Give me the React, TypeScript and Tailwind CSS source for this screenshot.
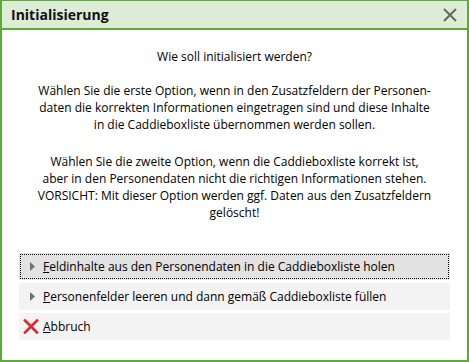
import React from 'react';

function Triangle() {
  return (
    <svg width="6" height="9" viewBox="0 0 6 9" className="shrink-0">
      <path d="M0 0 L5 4.5 L0 9 Z" fill="#707070" />
    </svg>
  );
}

function RedX() {
  return (
    <svg width="16" height="15" viewBox="0 0 16 15" className="shrink-0">
      <path d="M2 1.5 L14 13.5 M14 1.5 L2 13.5" stroke="#e0282c" strokeWidth="2.6" strokeLinecap="square" />
    </svg>
  );
}

export default function App() {
  return (
    <div
      className="w-[469px] h-[362px] bg-white border-2 border-t border-[#5aac36] flex flex-col text-black"
      style={{ fontFamily: '"Open Sans", "Noto Sans", sans-serif' }}
    >
      <div className="h-[29px] bg-[#ddecd5] border-b-2 border-[#5aac36] flex items-center justify-between pl-[9px] pr-[9px] shrink-0">
        <span className="text-[14px] font-bold text-[#111]">Initialisierung</span>
        <svg width="16" height="16" viewBox="0 0 16 16">
          <path d="M2 2 L14 14 M14 2 L2 14" stroke="#666" strokeWidth="2" />
        </svg>
      </div>

      <div className="flex flex-col items-center text-[12px] leading-[17px] text-center pt-[18px]">
        <p>Wie soll initialisiert werden?</p>
        <p className="mt-[17px]">
          Wählen Sie die erste Option, wenn in den Zusatzfeldern der Personen-
          <br />
          daten die korrekten Informationen eingetragen sind und diese Inhalte
          <br />
          in die Caddieboxliste übernommen werden sollen.
        </p>
        <p className="mt-[20px]">
          Wählen Sie die zweite Option, wenn die Caddieboxliste korrekt ist,
          <br />
          aber in den Personendaten nicht die richtigen Informationen stehen.
          <br />
          VORSICHT: Mit dieser Option werden ggf. Daten aus den Zusatzfeldern
          <br />
          gelöscht!
        </p>
      </div>

      <div className="flex flex-col gap-[3px] px-[17px] mt-[32px] text-[12px]">
        <div className="h-[27px] bg-[#e2e2e2] p-px">
          <div className="h-full border border-dotted border-black flex items-center gap-[7px] pl-[9px]">
            <Triangle />
            <span>
              <span className="underline">F</span>eldinhalte aus den Personendaten in die Caddieboxliste holen
            </span>
          </div>
        </div>
        <div className="h-[27px] bg-[#f3f3f3] flex items-center gap-[7px] pl-[11px]">
          <Triangle />
          <span>
            <span className="underline">P</span>ersonenfelder leeren und dann gemäß Caddieboxliste füllen
          </span>
        </div>
        <div className="h-[27px] bg-[#f3f3f3] flex items-center gap-[4px] pl-[4px]">
          <RedX />
          <span>
            <span className="underline">A</span>bbruch
          </span>
        </div>
      </div>
    </div>
  );
}
